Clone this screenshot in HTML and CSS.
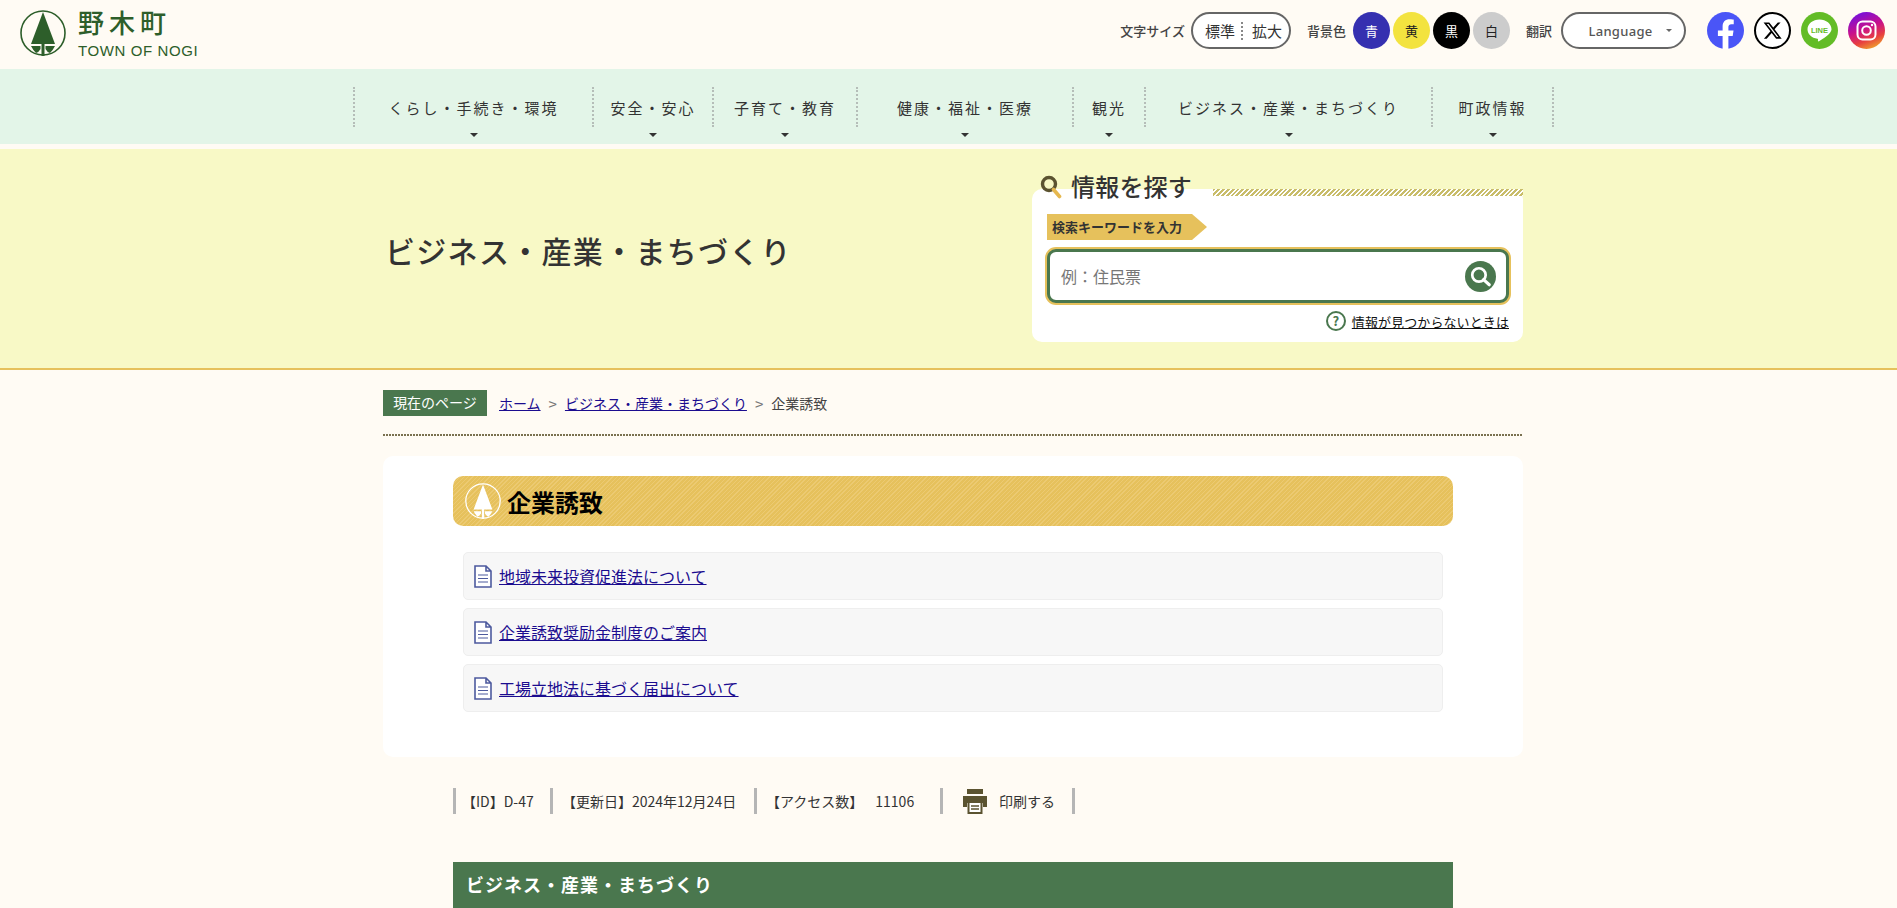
FILE: index.html
```html
<!DOCTYPE html>
<html lang="ja">
<head>
<meta charset="utf-8">
<title>企業誘致 | 野木町</title>
<link rel="stylesheet" href="styles.css">
</head>
<body>
<svg class="defs" width="0" height="0" aria-hidden="true">
  <symbol id="tree" viewBox="0 0 46 46">
    <circle cx="23" cy="23" r="22" fill="none" stroke="currentColor" stroke-width="1.6"/>
    <path d="M23 2 L11 34 L21.5 34 L21.5 46 L24.5 46 L24.5 34 L35 34 Z" fill="currentColor"/>
    <path d="M11 36 L20.5 36 L20.5 39 Q19 42 16 43 Q13 40 11 36 Z M35 36 L25.5 36 L25.5 39 Q27 42 30 43 Q33 40 35 36 Z" fill="currentColor"/>
  </symbol>
</svg>

<header class="top">
  <a class="logo" href="#">
    <svg class="logo-mark"><use href="#tree"/></svg>
    <span class="logo-text"><span class="logo-ja">野木町</span><span class="logo-en">TOWN OF NOGI</span></span>
  </a>
  <div class="tools">
    <span class="tool-label label-size">文字サイズ</span>
    <div class="size-pill"><span class="size-a">標準</span><span class="size-b">拡大</span></div>
    <span class="tool-label label-bg">背景色</span>
    <div class="colors">
      <span class="dot dot-blue">青</span>
      <span class="dot dot-yellow">黄</span>
      <span class="dot dot-black">黒</span>
      <span class="dot dot-white">白</span>
    </div>
    <span class="tool-label label-lang">翻訳</span>
    <div class="lang-pill"><span>Language</span><i class="lang-arrow"></i></div>
    <div class="social">
      <svg viewBox="0 0 24 24"><circle cx="12" cy="12" r="12" fill="#4a55f7"/><path fill="#fff" d="M16.671 15.543l.532-3.47h-3.328v-2.25c0-.949.465-1.874 1.956-1.874h1.513V4.996s-1.374-.235-2.686-.235c-2.741 0-4.533 1.662-4.533 4.669v2.643H7.078v3.47h3.047V24h3.75v-8.457z"/></svg>
      <svg viewBox="0 0 37 37"><circle cx="18.5" cy="18.5" r="17.5" fill="#fff" stroke="#000" stroke-width="2"/><g transform="translate(8.5 8.5) scale(.84)"><path fill="#000" d="M18.244 2.25h3.308l-7.227 8.26 8.502 11.24H16.17l-5.214-6.817L4.99 21.75H1.68l7.73-8.835L1.254 2.25H8.08l4.713 6.231zm-1.161 17.52h1.833L7.084 4.126H5.117z"/></g></svg>
      <svg viewBox="0 0 37 37"><circle cx="18.5" cy="18.5" r="18.5" fill="#63bc26"/><path fill="#fff" d="M18.5 7.5c-6.6 0-12 4.300-12 9.700 0 4.800 4.200 8.800 10 9.500.8.200.6 1 .4 2-.1.600.3 1 1.100.6 1.500-.8 8.500-5 10.800-8.200 1.100-1.400 1.700-2.900 1.700-3.900 0-5.400-5.400-9.700-12-9.700z"/><text class="line-text" x="18.500" y="20.500" text-anchor="middle">LINE</text></svg>
      <svg viewBox="0 0 37 37"><defs><linearGradient id="ig" x1="0.8" y1="1" x2="0.4" y2="0"><stop offset="0" stop-color="#f0b429"/><stop offset=".3" stop-color="#e8403f"/><stop offset=".6" stop-color="#c8108c"/><stop offset="1" stop-color="#7a10d8"/></linearGradient></defs><circle cx="18.500" cy="18.500" r="18.500" fill="url(#ig)"/><rect x="9.500" y="9.500" width="18" height="18" rx="5" fill="none" stroke="#fff" stroke-width="2"/><circle cx="18.500" cy="18.500" r="4.300" fill="none" stroke="#fff" stroke-width="2"/><circle cx="24" cy="13" r="1.200" fill="#fff"/></svg>
    </div>
  </div>
</header>

<nav class="gnav">
  <ul class="gnav-list">
    <li>くらし・手続き・環境</li>
    <li>安全・安心</li>
    <li>子育て・教育</li>
    <li>健康・福祉・医療</li>
    <li>観光</li>
    <li>ビジネス・産業・まちづくり</li>
    <li>町政情報</li>
  </ul>
</nav>

<section class="hero">
  <div class="hero-inner">
    <h2 class="hero-title">ビジネス・産業・まちづくり</h2>
    <div class="search">
      <div class="search-head">
        <svg class="search-mag" viewBox="0 0 22 24"><circle cx="9" cy="9" r="6.500" fill="none" stroke="#5b5330" stroke-width="3.400"/><path d="M13.500 14.500 L19.500 21.500" stroke="#e6b84f" stroke-width="3.600" stroke-linecap="round"/></svg>
        <span class="search-title">情報を探す</span>
        <span class="search-stripe"></span>
      </div>
      <div class="search-tag">検索キーワードを入力</div>
      <div class="search-input">
        <span class="placeholder">例：住民票</span>
        <span class="search-btn"><svg viewBox="0 0 30 30"><circle cx="13.500" cy="13.500" r="6.500" fill="none" stroke="#fff" stroke-width="2.600"/><path d="M18 18 L23.500 23" stroke="#fff" stroke-width="3" stroke-linecap="round"/></svg></span>
      </div>
      <div class="search-help">
        <span class="help-icon">?</span>
        <a href="#">情報が見つからないときは</a>
      </div>
    </div>
  </div>
</section>

<main class="wrap">
  <div class="crumbs">
    <span class="crumb-label">現在のページ</span>
    <a href="#">ホーム</a><span class="crumb-sep">&gt;</span>
    <a href="#">ビジネス・産業・まちづくり</a><span class="crumb-sep">&gt;</span>
    <span>企業誘致</span>
  </div>

  <article class="card">
    <h1 class="page-title"><svg class="title-mark"><use href="#tree"/></svg>企業誘致</h1>
    <ul class="links">
      <li><svg class="doc" viewBox="0 0 18 23"><path d="M1 1h11l5 5v16H1z M12 1v5h5" fill="#fff" stroke="#4d5a9e" stroke-width="1.600"/><path d="M4 10h10M4 13.500h10M4 17h10" stroke="#4d5a9e" stroke-width="1.200"/></svg><a href="#">地域未来投資促進法について</a></li>
      <li><svg class="doc" viewBox="0 0 18 23"><path d="M1 1h11l5 5v16H1z M12 1v5h5" fill="#fff" stroke="#4d5a9e" stroke-width="1.600"/><path d="M4 10h10M4 13.500h10M4 17h10" stroke="#4d5a9e" stroke-width="1.200"/></svg><a href="#">企業誘致奨励金制度のご案内</a></li>
      <li><svg class="doc" viewBox="0 0 18 23"><path d="M1 1h11l5 5v16H1z M12 1v5h5" fill="#fff" stroke="#4d5a9e" stroke-width="1.600"/><path d="M4 10h10M4 13.500h10M4 17h10" stroke="#4d5a9e" stroke-width="1.200"/></svg><a href="#">工場立地法に基づく届出について</a></li>
    </ul>
  </article>

  <div class="meta">
    <span class="meta-item meta-id">【ID】D-47</span>
    <span class="meta-item meta-date">【更新日】2024年12月24日</span>
    <span class="meta-item meta-count">【アクセス数】<b>11106</b></span>
    <span class="meta-item meta-print"><svg class="print" viewBox="0 0 26 26"><path fill="#5b5330" d="M5 1h16v5H5z M1 8h24v11h-4v-4H5v4H1z"/><rect x="6.500" y="14" width="13" height="11" fill="#fff" stroke="#5b5330" stroke-width="2"/><path d="M9 18h8M9 21h8" stroke="#5b5330" stroke-width="1.400"/></svg>印刷する</span>
  </div>

  <div class="side-head">ビジネス・産業・まちづくり</div>
</main>
</body>
</html>
```
FILE: styles.css
```css
* { box-sizing: border-box; }
html, body { margin: 0; padding: 0; }
body {
  background: #fffbf4;
  color: #333;
  font-family: "Noto Sans CJK JP", "Noto Sans", sans-serif;
  font-size: 14px;
  height: 908px;
  overflow: hidden;
}
a { color: #1b0c8f; }
ul { list-style: none; margin: 0; padding: 0; }
.defs { position: absolute; }

/* header */
.top {
  height: 69px;
  display: flex;
  justify-content: space-between;
  align-items: flex-start;
  padding: 0 12px 0 20px;
}
.logo { display: flex; text-decoration: none; color: #2d5e2a; margin-top: 10px; }
.logo-mark { width: 46px; height: 46px; color: #2d5e2a; }
.logo-text { display: flex; flex-direction: column; margin-left: 12px; margin-top: -2px; }
.logo-ja { font-size: 26px; font-weight: 500; line-height: 28px; letter-spacing: 5px; white-space: nowrap; }
.logo-en { font-family: "Liberation Sans Narrow", "Liberation Sans", sans-serif; font-size: 15px; line-height: 18px; margin-top: 6px; letter-spacing: .6px; white-space: nowrap; }
.tools { display: flex; align-items: center; height: 37px; margin-top: 12px; }
.tool-label { font-size: 13px; font-weight: 500; color: #444; white-space: nowrap; }
.label-bg { margin-left: 16px; }
.label-lang { margin-left: 16px; }
.size-pill {
  display: flex; align-items: center; width: 100px; height: 37px; margin-left: 6px;
  background: #fff; border: 2px solid #666; border-radius: 19px; font-size: 15px; color: #333;
}
.size-a { width: 47px; text-align: right; padding-right: 5px; border-right: 0; }
.size-b { margin-left: 1px; padding-left: 9px; border-left: 2px dotted #888; line-height: 18px; }
.colors { display: flex; gap: 3px; margin-left: 7px; }
.dot {
  width: 37px; height: 37px; border-radius: 50%; display: flex; align-items: center; justify-content: center;
  font-size: 13px;
}
.dot-blue { background: #3530b0; color: #fff; }
.dot-yellow { background: #f3e33f; color: #222; }
.dot-black { background: #000; color: #fff; }
.dot-white { background: #ccc; color: #222; }
.lang-pill {
  position: relative; width: 125px; height: 37px; margin-left: 9px; background: #fff;
  border: 2px solid #666; border-radius: 19px; display: flex; align-items: center; justify-content: center;
  font-family: "Noto Sans", sans-serif; font-size: 13px; font-weight: 500; color: #555; padding-right: 6px; letter-spacing: .3px;
}
.lang-arrow {
  position: absolute; right: 12px; top: 15px; width: 0; height: 0;
  border-left: 3px solid transparent; border-right: 3px solid transparent; border-top: 3px solid #666;
}
.social { display: flex; gap: 10px; margin-left: 21px; }
.social svg { width: 37px; height: 37px; display: block; }
.line-text { font-family: "Liberation Sans", sans-serif; font-size: 7.500px; font-weight: 700; fill: #63bc26; }

/* global nav */
.gnav { height: 75px; background: #e3f5e8; padding: 18px 0 0 353px; }
.gnav-list {
  display: grid;
  grid-template-columns: 239px 120px 144px 216px 72px 287px 121px;
  width: 1200px;
  height: 40px;
  border-left: 2px dotted #b5bdb8;
}
.gnav-list li {
  position: relative;
  display: flex; align-items: center; justify-content: center;
  padding-bottom: 0;
  border-right: 2px dotted #b5bdb8;
  font-size: 15px; letter-spacing: 2px; color: #333; white-space: nowrap;
}
.gnav-list li::after {
  content: ""; position: absolute; left: 50%; bottom: -10px; margin-left: -4px;
  border-left: 4px solid transparent; border-right: 4px solid transparent; border-top: 4px solid #333;
}

/* hero */
.hero { height: 221px; margin-top: 5px; background: #f8f9c6; border-bottom: 2px solid #e6c15c; }
.hero-inner { width: 1140px; margin-left: 383px; display: flex; justify-content: space-between; position: relative; }
.hero-title { margin: 80px 0 0 2px; font-size: 30px; line-height: 42px; font-weight: 500; letter-spacing: 1.300px; color: #333; white-space: nowrap; }
.search { width: 491px; height: 153px; margin-top: 40px; background: #fff; border-radius: 10px; padding: 0 13px 0 14px; }
.search-head { display: flex; align-items: flex-start; height: 25px; margin: 0 -13px 0 -14px; position: relative; }
.search-mag { width: 22px; height: 24px; margin: -14px 0 0 8px; }
.search-title { font-size: 24px; line-height: 32px; font-weight: 500; letter-spacing: .2px; color: #333; margin: -19px 0 0 9px; white-space: nowrap; }
.search-stripe {
  position: absolute; left: 181px; right: 0; top: 0; height: 7px;
  background: repeating-linear-gradient(135deg, #c9bd6a 0 2px, #fff 2px 3.400px);
}
.search-tag {
  width: 160px; height: 26px; background: #e6c15c; line-height: 26px; padding-left: 5px;
  font-size: 13px; font-weight: 700; color: #333; white-space: nowrap;
  clip-path: polygon(0 0, 145px 0, 100% 50%, 145px 100%, 0 100%);
  margin-left: 1px;
}
.search-input {
  display: flex; align-items: center; justify-content: space-between;
  height: 56px; margin-top: 8px; background: #fff;
  border: 4px solid #4a774e; border-radius: 10px; outline: 2px solid #e6c15c; outline-offset: -1px;
  padding: 0 10px 0 11px;
}
.placeholder { font-size: 16px; color: #777; }
.search-btn { width: 31px; height: 31px; border-radius: 50%; background: #4a774e; display: block; }
.search-btn svg { width: 31px; height: 31px; display: block; }
.search-help { display: flex; justify-content: flex-end; align-items: center; margin-top: 7px; padding-right: 1px; }
.help-icon {
  width: 20px; height: 20px; border: 2px solid #4a774e; border-radius: 50%; color: #4a774e;
  font-size: 13px; font-weight: 700; line-height: 16px; text-align: center; margin-right: 6px;
}
.search-help a { color: #111; font-size: 13px; letter-spacing: .1px; white-space: nowrap; }

/* content */
.wrap { width: 1140px; margin-left: 383px; }
.crumbs {
  display: flex; align-items: center; height: 26px; margin-top: 20px; font-size: 14px; color: #444; white-space: nowrap;
}
.crumb-label { width: 104px; height: 26px; line-height: 25px; text-align: center; background: #4a774e; color: #fff; margin-right: 12px; }
.crumb-sep { color: #777; font-size: 15px; margin: 0 8px 0 8px; }
.card {
  margin-top: 40px; height: 301px; background: #fff; border-radius: 10px; padding: 20px 70px 0;
  position: relative;
}
.crumbs::after {
  content: ""; position: absolute; left: 383px; width: 1140px; top: 434px; height: 2px;
  background: repeating-linear-gradient(90deg, #7a7150 0 2px, transparent 2px 3px);
}
.page-title {
  margin: 0; height: 50px; display: flex; align-items: center; padding-left: 12px;
  border-radius: 10px; font-size: 24px; font-weight: 700; color: #000;
  background: repeating-linear-gradient(135deg, #e6c15c 0 2px, #ecca72 2px 3px);
}
.title-mark { width: 36px; height: 36px; color: #fff; margin-right: 6px; }
.links { margin: 26px 10px 0; display: flex; flex-direction: column; gap: 8px; }
.links li {
  height: 48px; display: flex; align-items: center; padding-left: 10px;
  background: #f7f7f7; border: 1px solid #eee; border-radius: 5px; font-size: 16px;
}
.doc { width: 18px; height: 23px; margin-right: 7px; flex: none; }
.meta { display: flex; height: 26px; margin: 31px 0 0 70px; font-size: 14px; color: #333; white-space: nowrap; }
.meta-item { display: flex; align-items: center; border-left: 3px solid #b5b5b5; height: 26px; }
.meta-id { width: 97px; padding-left: 6px; }
.meta-date { width: 204px; padding-left: 9px; }
.meta-count { width: 186px; padding-left: 9px; }
.meta-count b { font-weight: 400; margin-left: 12px; }
.meta-print { width: 135px; padding-left: 19px; border-right: 3px solid #b5b5b5; }
.print { width: 26px; height: 26px; margin-right: 11px; }
.side-head {
  height: 46px; margin: 48px 0 0 70px; width: 1000px; background: #4a774e; color: #fff;
  font-size: 18px; font-weight: 700; letter-spacing: 1px; padding-left: 13px; line-height: 44px;
}
```
